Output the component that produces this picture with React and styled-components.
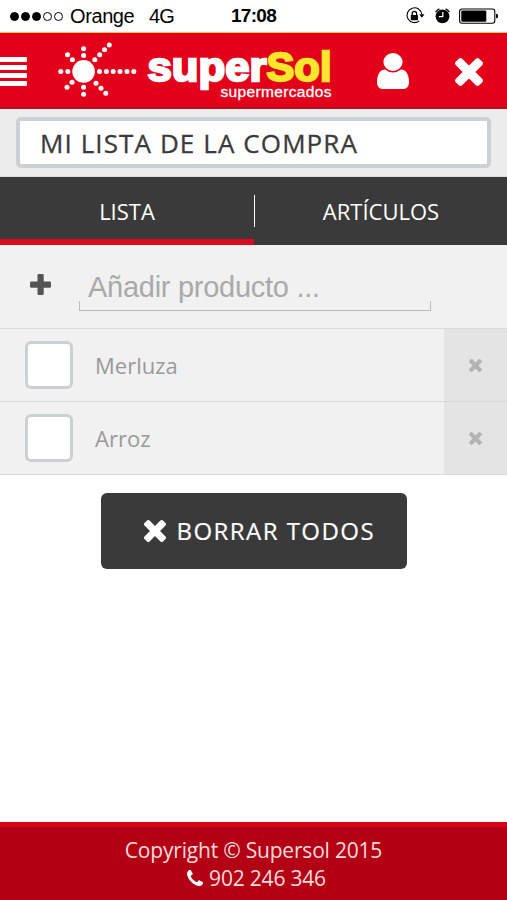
import React from 'react';
import styled, { createGlobalStyle } from 'styled-components';

const items = ['Merluza', 'Arroz'];

const rays = [
  [83.6, 48.7], [83.6, 55.6], [83.6, 87.3], [83.6, 94.3],
  [60.8, 71.4], [67.8, 71.4],
  [99.5, 71.4], [106.4, 71.4], [113.2, 71.4], [120, 71.4], [127, 71.4], [133.8, 71.4],
  [67.5, 54.8], [72.4, 59.8], [67, 87.3], [72, 82.3],
  [94.8, 59.8], [99.7, 54.8], [104.5, 49.8], [109.3, 44.9],
  [96, 83.3], [101, 88.3], [105.8, 93.2],
];

function TimesIcon() {
  return (
    <svg viewBox="110 366 1188 1188">
      <path d="M1298 1322q0 40-28 68l-136 136q-28 28-68 28t-68-28l-294-294-294 294q-28 28-68 28t-68-28l-136-136q-28-28-28-68t28-68l294-294-294-294q-28-28-28-68t28-68l136-136q28-28 68-28t68 28l294 294 294-294q28-28 68-28t68 28l136 136q28 28 28 68t-28 68l-294 294 294 294q28 28 28 68z" />
    </svg>
  );
}

function UserIcon() {
  return (
    <svg viewBox="0 0 1280 1536" preserveAspectRatio="none">
      <path d="M1280 1271q0 109-62.5 187t-150.5 78h-854q-88 0-150.5-78t-62.5-187q0-85 8.5-160.5t31.5-152 58.5-131 94-89 134.5-34.5q131 128 313 128t313-128q76 0 134.5 34.5t94 89 58.5 131 31.5 152 8.5 160.5zm-256-887q0 159-112.5 271.5t-271.5 112.5-271.5-112.5-112.5-271.5 112.5-271.5 271.5-112.5 271.5 112.5 112.5 271.5z" />
    </svg>
  );
}

function PhoneIcon() {
  return (
    <svg viewBox="0 0 1408 1408">
      <path d="M1408 1112q0 27-10 70.5t-21 68.5q-21 50-122 106-94 51-186 51-27 0-53-3.5t-57.5-12.5-47-14.5-55.5-20.5-49-18q-98-35-175-83-127-79-264-216t-216-264q-48-77-83-175-3-9-18-49t-20.5-55.5-14.5-47-12.5-57.5-3.5-53q0-92 51-186 56-101 106-122 25-11 68.5-21t70.5-10q14 0 21 3 18 6 53 76 11 19 30 54t35 63.5 31 53.5q3 4 17.5 25t21.5 35.5 7 28.5q0 20-28.5 50t-62 55-62 53-28.5 46q0 9 5 22.5t8.5 20.5 14 24 11.5 19q76 137 174 235t235 174q2 1 19 11.5t24 14 20.5 8.5 22.5 5q18 0 46-28.5t53-62 55-62 50-28.5q14 0 28.5 7t35.5 21.5 25 17.5q25 15 53.5 31t63.5 35 54 30q70 35 76 53 3 7 3 21z" />
    </svg>
  );
}

function Logo() {
  return (
    <LogoSvg viewBox="56 38 278 64">
      <circle cx="83.6" cy="71.4" r="11.3" />
      {rays.map(([x, y]) => <circle key={`${x}-${y}`} cx={x} cy={y} r="2.5" />)}
      <text x="147.5" y="80.7" fontSize="40" fontWeight="bold" textLength="119" lengthAdjust="spacingAndGlyphs" strokeWidth="2.3" stroke="#fff">super</text>
      <text x="266.5" y="81" fontSize="41" fontWeight="bold" textLength="65" lengthAdjust="spacingAndGlyphs" strokeWidth="2.3" stroke="#ffe52b" fill="#ffe52b">Sol</text>
      <text x="220.5" y="97" fontSize="15.5" textLength="111" strokeWidth="0.3" stroke="#fff">supermercados</text>
    </LogoSvg>
  );
}

function StatusBar() {
  return (
    <Status>
      <Signal>
        <Dot $full /><Dot $full /><Dot $full /><Dot /><Dot />
      </Signal>
      <Carrier>Orange</Carrier>
      <Network>4G</Network>
      <Clock>17:08</Clock>
      <StatusIcons viewBox="404 6 96 20">
        <g fill="none" stroke="#000" strokeWidth="1.1">
          <path d="M419.3 20.8 A7.4 7.4 0 1 1 421.8 14.5" />
          <path d="M412.2 15.5v-2a2.2 2.2 0 0 1 4.4 0v2" strokeWidth="1.3" />
          <rect x="459.6" y="9" width="35.2" height="14.3" rx="2.5" />
        </g>
        <path d="M419.3 14.3h5.2l-2.6 3.5z" />
        <rect x="410.8" y="14.9" width="7.2" height="5.3" rx=".6" />
        <circle cx="442.5" cy="16.3" r="6.9" />
        <path d="M435.6 12.3a8.5 8.5 0 0 1 3.8-3.5M445.6 8.8a8.5 8.5 0 0 1 3.8 3.5" fill="none" stroke="#000" strokeWidth="1.3" />
        <path d="M442.8 12v4.6h-4" fill="none" stroke="#fff" strokeWidth="1.3" />
        <rect x="461.3" y="10.6" width="25" height="11.1" rx="1" />
        <path d="M496 13.6q2.2.5 2.2 2.5t-2.2 2.5z" />
      </StatusIcons>
    </Status>
  );
}

function App() {
  return (
    <Page>
      <GlobalStyle />
      <StatusBar />

      <Header>
        <Menu><i /><i /><i /><i /></Menu>
        <Logo />
        <UserButton><UserIcon /></UserButton>
        <CloseButton><TimesIcon /></CloseButton>
      </Header>

      <TitleBar>
        <Title>MI LISTA DE LA COMPRA</Title>
      </TitleBar>

      <Tabs>
        <Tab $active>LISTA</Tab>
        <Divider />
        <Tab>ARTÍCULOS</Tab>
      </Tabs>

      <AddRow>
        <Plus viewBox="0 0 21 21">
          <rect x="7.5" width="6.2" height="21" rx="1.3" />
          <rect y="7.5" width="21" height="6.2" rx="1.3" />
        </Plus>
        <Field>
          <Placeholder>Añadir producto ...</Placeholder>
          <Bracket />
        </Field>
      </AddRow>

      {items.map((item) => (
        <Row key={item}>
          <Checkbox />
          <Label>{item}</Label>
          <Remove><TimesIcon /></Remove>
        </Row>
      ))}

      <ClearButton>
        <TimesIcon />
        <span>BORRAR TODOS</span>
      </ClearButton>

      <Footer>
        <Copyright>Copyright © Supersol 2015</Copyright>
        <Phone><PhoneIcon /><span>902 246 346</span></Phone>
      </Footer>
    </Page>
  );
} export default App;

const GlobalStyle = createGlobalStyle`
  * {
    box-sizing: border-box;
  }

  body {
    margin: 0;
    background: #fff;
  }

  svg {
    display: block;
    flex: none;
  }
`
const Page = styled.div`
  width: 507px;
  height: 900px;
  display: flex;
  flex-direction: column;
  overflow: hidden;
  background: #fff;
  font-family: "Open Sans", sans-serif;
  white-space: nowrap;
`
const Status = styled.div`
  height: 32px;
  flex: none;
  display: flex;
  align-items: center;
  padding-left: 10px;
  color: #000;
  font-family: "Liberation Sans", sans-serif;
  font-size: 20px;
  line-height: 32px;
`
const Signal = styled.div`
  display: flex;
  gap: 2px;
  width: 60px;
`
const Dot = styled.i`
  width: 9px;
  height: 9px;
  border: 1px solid #000;
  border-radius: 50%;
  background: ${(props) => (props.$full ? '#000' : '#fff')};
`
const Carrier = styled.span`
  width: 79px;
  letter-spacing: -0.4px;
`
const Network = styled.span`
  width: 82px;
  letter-spacing: -0.8px;
`
const Clock = styled.span`
  width: 173px;
  font-weight: bold;
  font-size: 19px;
  letter-spacing: -0.7px;
`
const StatusIcons = styled.svg`
  width: 96px;
  height: 20px;
`
const Header = styled.header`
  height: 77px;
  flex: none;
  display: flex;
  align-items: center;
  border-top: 1px solid #f9c83a;
  border-bottom: 2px solid #b90f20;
  background: #e2001a;
  fill: #fff;
`
const Menu = styled.div`
  width: 27px;
  height: 29px;
  margin: 3px 29px 0 0;
  display: flex;
  flex-direction: column;
  justify-content: space-between;

  i {
    height: 5px;
    border-radius: 0 1px 1px 0;
    background: #fff;
  }
`
const LogoSvg = styled.svg`
  width: 278px;
  height: 64px;
  font-family: "Liberation Sans", sans-serif;
`
const UserButton = styled.div`
  margin-left: 43px;
  padding-top: 2px;

  svg {
    width: 32px;
    height: 36px;
  }
`
const CloseButton = styled.div`
  margin-left: 46px;
  padding-top: 4px;

  svg {
    width: 28px;
    height: 28px;
  }
`
const TitleBar = styled.div`
  height: 68px;
  flex: none;
  padding: 8px 16px;
  border-bottom: 1px solid #dcdcdd;
  background: #ececed;
`
const Title = styled.div`
  height: 51px;
  padding-left: 20px;
  border: 4.5px solid #cbd0d3;
  border-radius: 5px;
  background: #fff;
  color: #3a3a3a;
  font-size: 26px;
  line-height: 44px;
  letter-spacing: 1.1px;
  -webkit-text-stroke: 0.3px #3a3a3a;
`
const Tabs = styled.nav`
  height: 68px;
  flex: none;
  display: flex;
  align-items: center;
  background: #3a3a3a;
`
const Tab = styled.div`
  width: ${(props) => (props.$active ? 254 : 252)}px;
  height: 68px;
  border-bottom: 6px solid ${(props) => (props.$active ? '#d90b20' : 'transparent')};
  color: #fff;
  font-size: 22px;
  line-height: 69px;
  text-align: center;
`
const Divider = styled.i`
  width: 1px;
  height: 32px;
  background: #fff;
`
const AddRow = styled.div`
  height: 84px;
  flex: none;
  display: flex;
  padding: 29px 0 0 30px;
  border-bottom: 1px solid #dcdcdc;
  background: #f1f1f1;
`
const Plus = styled.svg`
  width: 21px;
  height: 21px;
  fill: #555;
`
const Field = styled.div`
  width: 352px;
  margin-left: 28px;
  margin-top: -9px;
`
const Placeholder = styled.div`
  height: 36px;
  padding-left: 9px;
  color: #a9a9a9;
  font-family: "Liberation Sans", sans-serif;
  font-size: 29px;
  line-height: 44px;
  letter-spacing: -0.27px;
`
const Bracket = styled.div`
  height: 10px;
  border: 1px solid #bbb;
  border-top: 0;
`
const Row = styled.div`
  height: 73px;
  flex: none;
  display: flex;
  align-items: center;
  padding-left: 25px;
  border-bottom: 1px solid #d8d8d8;
  background: #f1f1f1;
`
const Checkbox = styled.div`
  width: 48px;
  height: 48px;
  border: 3px solid #cbd0d3;
  border-radius: 6px;
  background: #fff;
`
const Label = styled.div`
  flex: 1;
  padding: 0 0 1px 22px;
  color: #999;
  font-size: 22px;
`
const Remove = styled.div`
  width: 63px;
  height: 72px;
  display: flex;
  align-items: center;
  justify-content: center;
  background: #e4e4e4;
  fill: #b3b3b3;

  svg {
    width: 13px;
    height: 13px;
  }
`
const ClearButton = styled.div`
  width: 306px;
  height: 76px;
  flex: none;
  display: flex;
  align-items: center;
  margin: 18px 0 0 100.5px;
  padding-left: 43px;
  border-radius: 6px;
  background: #3a3a3a;
  color: #fff;
  fill: #fff;
  font-size: 24px;
  letter-spacing: 1.45px;
  -webkit-text-stroke: 0.2px #fff;

  svg {
    width: 22px;
    height: 22px;
    margin-right: 10px;
  }

  span {
    padding: 0 0 1px 1px;
  }
`
const Footer = styled.footer`
  height: 78px;
  margin-top: auto;
  display: flex;
  flex-direction: column;
  align-items: center;
  padding-top: 9px;
  border-top: 5px solid #d60518;
  background: #b40014;
  color: #fbdcdc;
  font-size: 21px;
  line-height: 28px;
  letter-spacing: -0.2px;
`
const Copyright = styled.div`
  height: 28px;
`
const Phone = styled.div`
  display: flex;
  align-items: center;
  padding-left: 6px;
  fill: #fff;

  svg {
    width: 16px;
    height: 16px;
    margin-right: 6px;
  }
`
